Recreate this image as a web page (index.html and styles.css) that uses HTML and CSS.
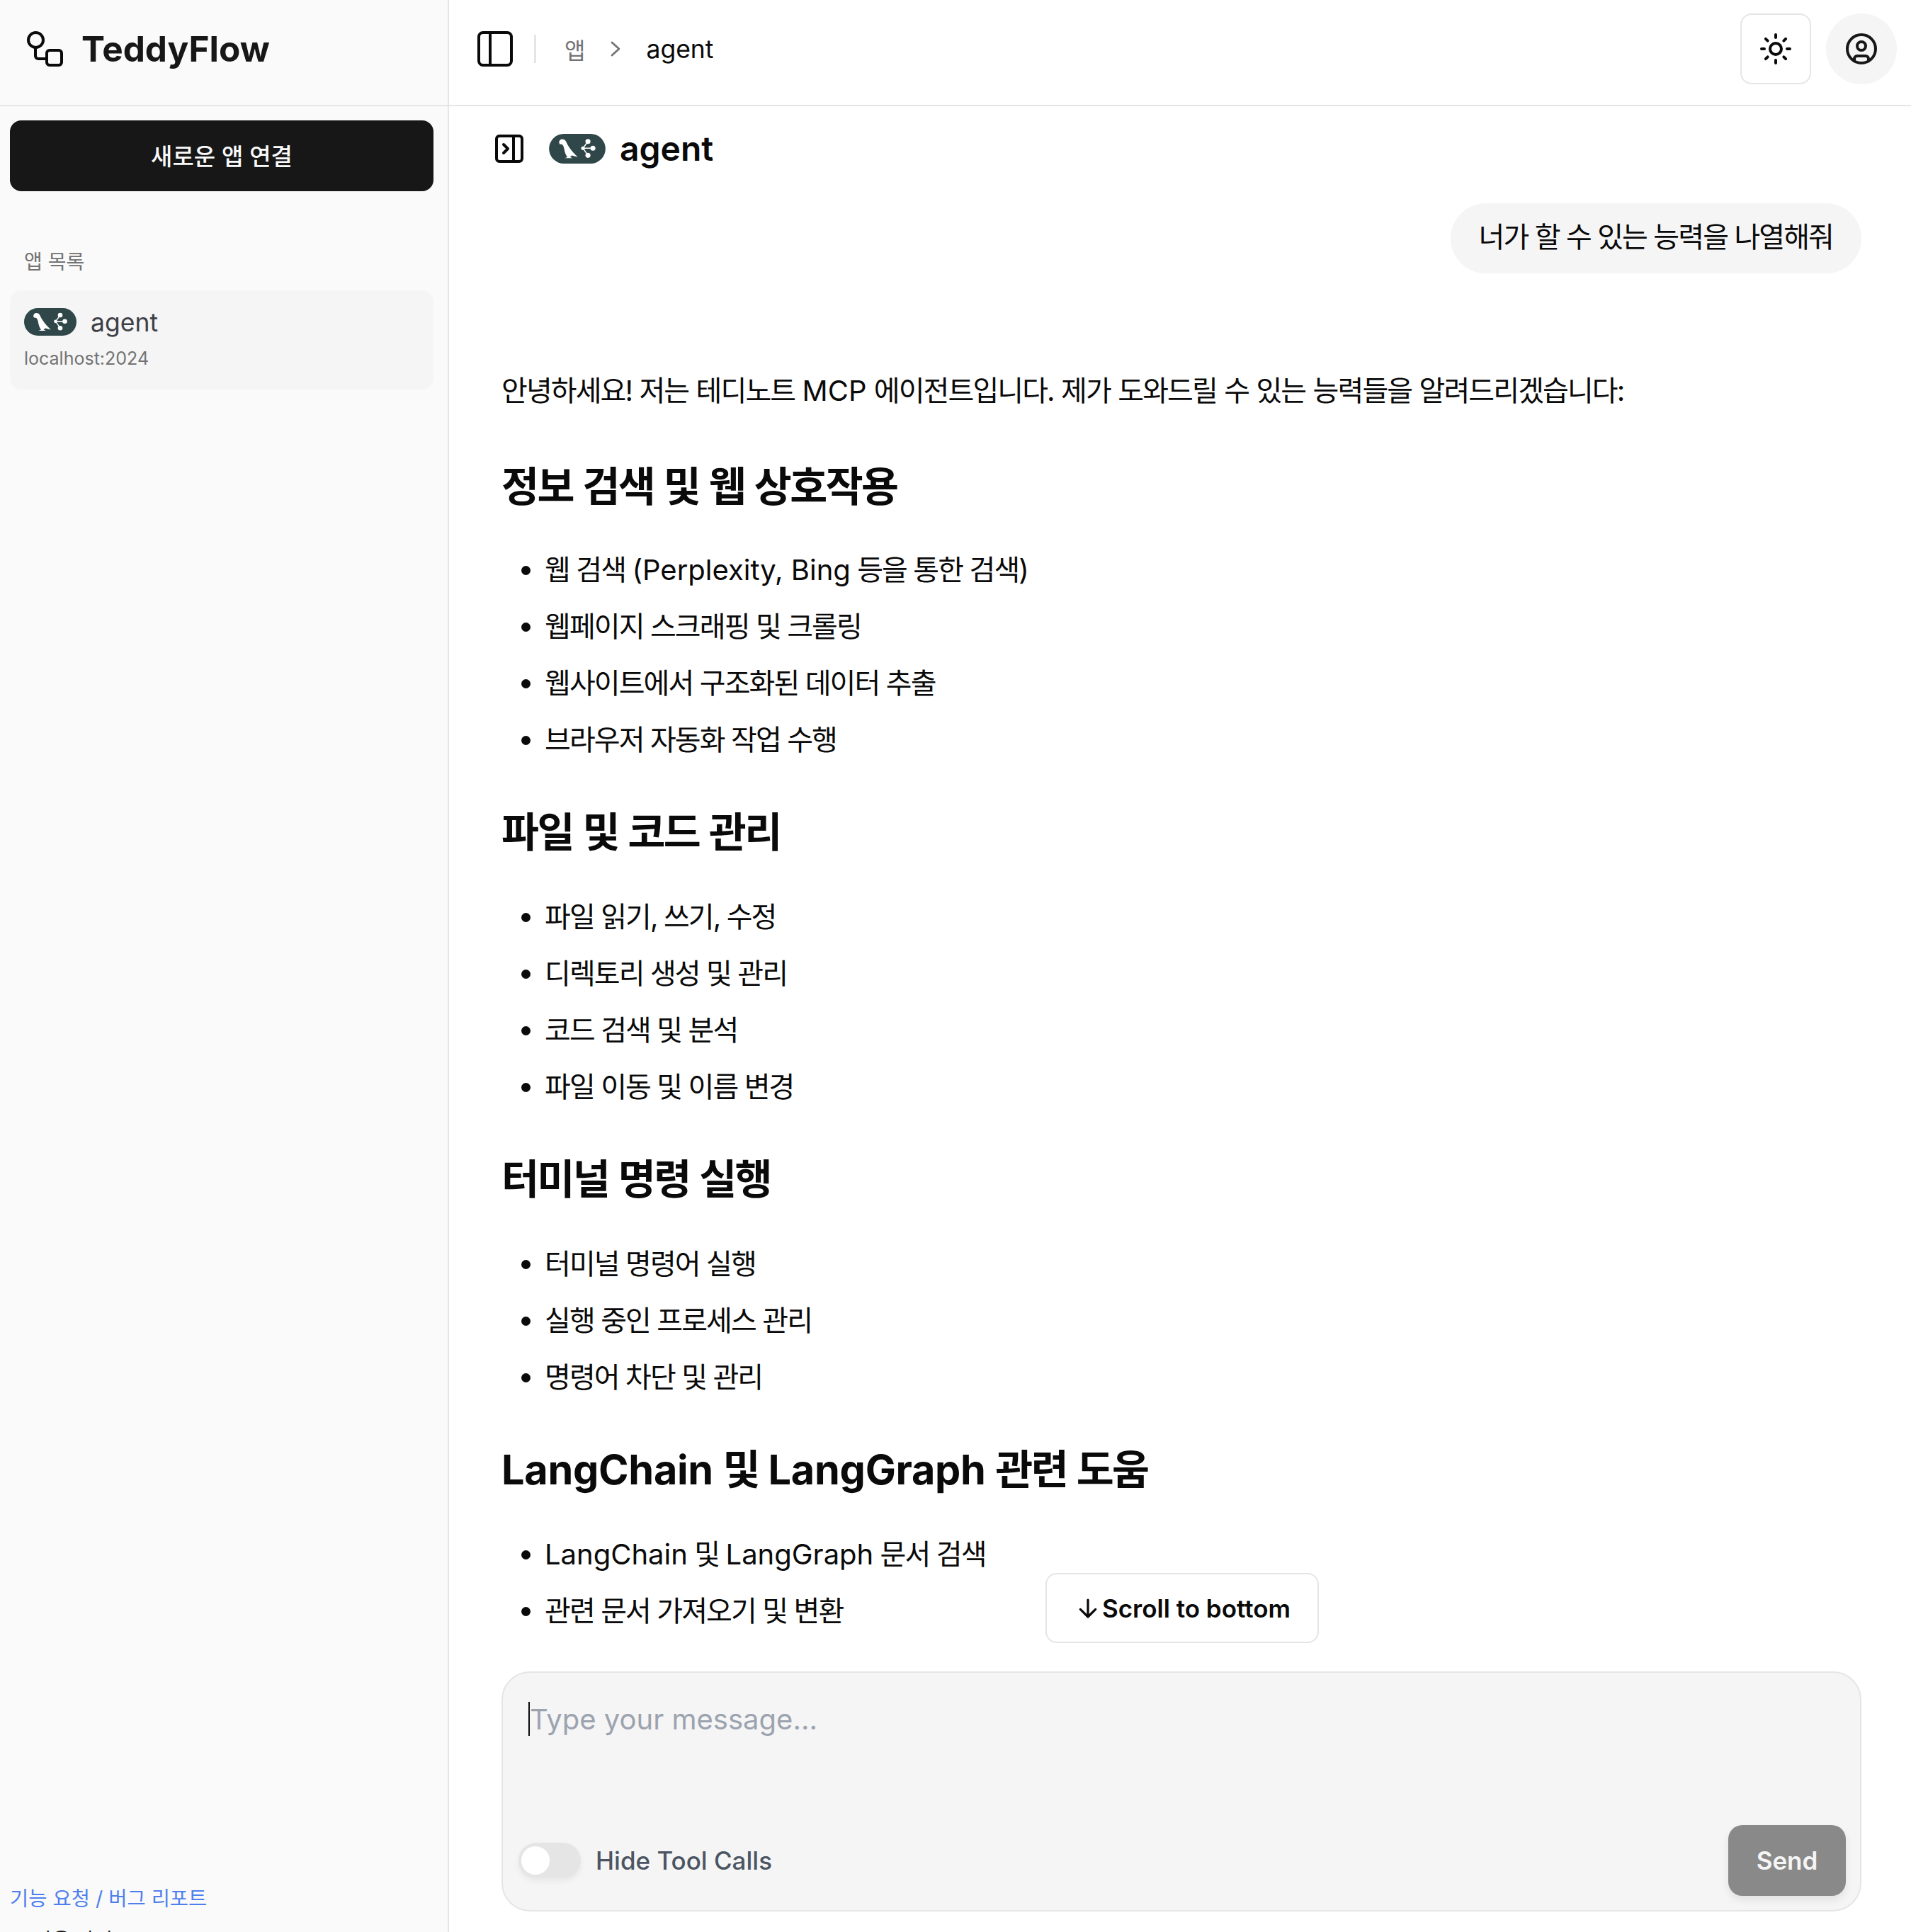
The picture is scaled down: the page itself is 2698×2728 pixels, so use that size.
FILE: index.html
```html
<!DOCTYPE html>
<html lang="ko">
<head>
<meta charset="utf-8">
<title>TeddyFlow</title>
<link rel="stylesheet" href="styles.css">
</head>
<body>
<svg class="defs" width="0" height="0" aria-hidden="true">
  <symbol id="lg" viewBox="0 0 74 39">
    <rect width="74" height="39" rx="19.5" fill="#2f4748"/>
    <path fill="#fff" d="M13.100 11C13.500 8.500 15 6.900 17 6.900 20 6.900 21.500 8 22.500 10.500 23.500 13 25 15.500 26.600 17.800 29.500 22 33.500 26.500 37.600 30.400L30 28.400 27.500 30.500 31 31.900H20.500L24 30.600C22 28 20.500 24 19.700 19 19.200 16.500 18.500 15 17.500 14.300 16 13.200 14.200 14 13.800 13.200Z"/>
    <g fill="#fff">
      <circle cx="51" cy="10" r="3.300"/>
      <circle cx="57.500" cy="18.800" r="3.300"/>
      <circle cx="51" cy="28.200" r="3.300"/>
      <circle cx="44.500" cy="18.800" r="2.400"/>
    </g>
    <path fill="none" stroke="#fff" stroke-width="1.400" stroke-linecap="round" d="M44.500 18.800H55M44.500 18.800L51 10M44.500 18.800L51 28.200"/>
  </symbol>
</svg>
<aside class="sidebar">
  <div class="brand">
    <svg class="brand-icon" viewBox="0 0 52 52" fill="none" stroke="currentColor" stroke-width="4" stroke-linecap="round" stroke-linejoin="round">
      <circle cx="12.500" cy="12.500" r="10.500"/>
      <path d="M12 23v12a4 4 0 0 0 4 4h12"/>
      <rect x="28" y="27" width="21" height="21" rx="4"/>
    </svg>
    <span class="brand-name">TeddyFlow</span>
  </div>
  <div class="sidebar-body">
    <button class="new-app">새로운 앱 연결</button>
    <div class="section-label">앱 목록</div>
    <div class="app-card">
      <div class="app-row">
        <svg class="pill-sm"><use href="#lg"/></svg>
        <span class="app-name">agent</span>
      </div>
      <div class="app-url">localhost:2024</div>
    </div>
  </div>
  <div class="sidebar-foot">
    <a class="report" href="#">기능 요청 / 버그 리포트</a>
    <div class="foot-line">사용 가이드</div>
  </div>
</aside>
<main class="main">
  <header class="topbar">
    <svg class="toggle-icon" viewBox="0 0 50 50" fill="none" stroke="currentColor" stroke-width="4">
      <rect x="2" y="2" width="46" height="46" rx="6"/>
      <path d="M18 2v46"/>
    </svg>
    <span class="vsep"></span>
    <span class="crumb">앱</span>
    <svg class="chev" viewBox="0 0 14 22" fill="none" stroke="currentColor" stroke-width="2.800" stroke-linecap="round" stroke-linejoin="round"><path d="M2 2l10 9-10 9"/></svg>
    <span class="crumb-cur">agent</span>
    <div class="top-actions">
      <button class="theme-btn">
        <svg class="ico48" viewBox="0 0 24 24" fill="none" stroke="currentColor" stroke-width="2" stroke-linecap="round" stroke-linejoin="round"><circle cx="12" cy="12" r="4"/><path d="M12 2v2M12 20v2M4.930 4.930l1.410 1.410M17.660 17.660l1.410 1.410M2 12h2M20 12h2M6.340 17.660l-1.410 1.410M19.070 4.930l-1.410 1.410"/></svg>
      </button>
      <button class="avatar-btn">
        <svg class="ico48" viewBox="0 0 24 24" fill="none" stroke="currentColor" stroke-width="2" stroke-linecap="round" stroke-linejoin="round"><circle cx="12" cy="12" r="10"/><circle cx="12" cy="10" r="3"/><path d="M7 20.662V19a2 2 0 0 1 2-2h6a2 2 0 0 1 2 2v1.662"/></svg>
      </button>
    </div>
  </header>
  <section class="chat">
    <div class="chat-title">
      <svg class="ico48 panel" viewBox="0 0 24 24" fill="none" stroke="currentColor" stroke-width="2" stroke-linecap="round" stroke-linejoin="round"><rect x="3" y="3" width="18" height="18" rx="2"/><path d="M15 3v18M8 9l3 3-3 3"/></svg>
      <svg class="pill-lg"><use href="#lg"/></svg>
      <h1 class="chat-name">agent</h1>
    </div>
    <div class="messages">
      <div class="bubble">너가 할 수 있는 능력을 나열해줘</div>
      <p class="intro">안녕하세요! 저는 테디노트 <span class="en">MCP</span> 에이전트입니다. 제가 도와드릴 수 있는 능력들을 알려드리겠습니다:</p>
      <h2>정보 검색 및 웹 상호작용</h2>
      <ul>
        <li>웹 검색 <span class="en">(Perplexity, Bing</span> 등을 통한 검색<span class="en">)</span></li>
        <li>웹페이지 스크래핑 및 크롤링</li>
        <li>웹사이트에서 구조화된 데이터 추출</li>
        <li>브라우저 자동화 작업 수행</li>
      </ul>
      <h2>파일 및 코드 관리</h2>
      <ul>
        <li>파일 읽기, 쓰기, 수정</li>
        <li>디렉토리 생성 및 관리</li>
        <li>코드 검색 및 분석</li>
        <li>파일 이동 및 이름 변경</li>
      </ul>
      <h2>터미널 명령 실행</h2>
      <ul>
        <li>터미널 명령어 실행</li>
        <li>실행 중인 프로세스 관리</li>
        <li>명령어 차단 및 관리</li>
      </ul>
      <h2><span class="en">LangChain</span> 및 <span class="en">LangGraph</span> 관련 도움</h2>
      <ul>
        <li><span class="en">LangChain</span> 및 <span class="en">LangGraph</span> 문서 검색</li>
        <li>관련 문서 가져오기 및 변환</li>
      </ul>
    </div>
    <button class="scroll-btn">
      <svg class="arrow" viewBox="0 0 24 24" fill="none" stroke="currentColor" stroke-width="2.400" stroke-linecap="round" stroke-linejoin="round"><path d="M12 3v18M4 13l8 8 8-8"/></svg>
      <span>Scroll to bottom</span>
    </button>
  </section>
  <form class="composer">
    <div class="input-line"><span class="caret"></span><span class="placeholder">Type your message...</span></div>
    <div class="composer-foot">
      <span class="switch"><span class="knob"></span></span>
      <span class="switch-label">Hide Tool Calls</span>
      <button class="send" type="button">Send</button>
    </div>
  </form>
</main>
</body>
</html>
```
FILE: styles.css
```css
* { box-sizing: border-box; }
html, body { margin: 0; height: 2728px; overflow: hidden; }
body {
  display: flex;
  width: 2698px;
  background: #fff;
  color: #0a0a0a;
  font-family: Inter, "Noto Sans CJK KR", sans-serif;
}
.defs { position: absolute; }
button { font-family: inherit; margin: 0; }

.sidebar {
  width: 634px;
  flex: none;
  height: 2728px;
  display: flex;
  flex-direction: column;
  background: #fafafa;
  border-right: 2px solid #e5e5e5;
}
.brand {
  height: 150px;
  flex: none;
  display: flex;
  align-items: center;
  gap: 25px;
  padding: 0 0 10px 38px;
  border-bottom: 2px solid #e5e5e5;
}
.brand-icon { width: 52px; height: 52px; margin-top: 2px; color: #0a0a0a; }
.brand-name { font-size: 49.500px; font-weight: 700; color: #171717; }
.sidebar-body { flex: 1; padding: 20px 20px 0 14px; }
.new-app {
  width: 598px;
  height: 100px;
  padding: 0 0 3px;
  border: 0;
  border-radius: 16px;
  background: #171717;
  color: #fafafa;
  font-size: 33px;
  font-weight: 500;
}
.section-label { margin: 72px 0 0 20px; font-size: 28px; line-height: 56px; color: #737373; height: 56px; }
.app-card {
  margin-top: 12px;
  width: 598px;
  height: 140px;
  padding: 25px 20px 0 20px;
  border-radius: 16px;
  background: #f5f5f5;
}
.app-row { display: flex; align-items: center; gap: 20px; height: 39px; }
.pill-sm { width: 74px; height: 39px; flex: none; }
.app-name { margin-top: 2px; font-size: 35.500px; color: #3f3f46; }
.app-url { margin-top: 14px; font-size: 25px; line-height: 36px; color: #737373; }
.sidebar-foot { height: 78px; padding-left: 14px; overflow: hidden; }
.report { display: block; height: 73px; padding-top: 14px; line-height: 34px; font-size: 28.500px; color: #4f7fee; text-decoration: none; }
.foot-line { padding-left: 34px; line-height: 34px; font-size: 28px; color: #171717; }

.main { flex: 1; min-width: 0; height: 2728px; display: flex; flex-direction: column; }
.topbar {
  height: 150px;
  flex: none;
  display: flex;
  align-items: center;
  padding: 0 20px 10px 40px;
  border-bottom: 2px solid #e5e5e5;
}
.toggle-icon { width: 50px; height: 50px; flex: none; color: #0a0a0a; }
.vsep { width: 3px; height: 40px; margin-left: 30px; background: #e5e5e5; }
.crumb { margin-left: 40px; font-size: 32px; color: #737373; }
.chev { width: 14px; height: 22px; margin-left: 36px; color: #737373; }
.crumb-cur { margin-left: 36px; font-size: 35.500px; color: #0a0a0a; }
.top-actions { margin-left: auto; display: flex; gap: 21px; }
.theme-btn {
  width: 100px; height: 100px;
  display: flex; align-items: center; justify-content: center;
  padding: 0;
  background: #fff;
  border: 2px solid #e5e5e5;
  border-radius: 16px;
  color: #0a0a0a;
}
.avatar-btn {
  width: 100px; height: 100px;
  display: flex; align-items: center; justify-content: center;
  padding: 0;
  border: 0;
  border-radius: 50%;
  background: #f5f5f5;
  color: #171717;
}
.ico48 { width: 48px; height: 48px; flex: none; }

.chat {
  position: relative;
  flex: 1;
  min-height: 0;
  padding: 36px 70px 0 74px;
}
.chat-title { display: flex; align-items: center; height: 48px; margin-left: -13px; }
.panel { color: #0a0a0a; }
.pill-lg { width: 80px; height: 42px; margin-left: 32px; flex: none; }
.chat-name { margin: -2px 0 0 20px; font-size: 48px; font-weight: 600; }
.messages { height: 2090px; overflow: hidden; letter-spacing: -1.900px; }
.en { letter-spacing: 0; word-spacing: 0; }
.bubble {
  width: fit-content;
  margin: 53px 0 0 auto;
  padding: 0 40px;
  height: 99px;
  line-height: 96px;
  border-radius: 50px;
  background: #f5f5f5;
  font-size: 40px;
}
.intro { margin: 134px 0 0; font-size: 40px; line-height: 64px; word-spacing: 1px; }
h2 { margin: 55px 0 45px; font-size: 57.600px; font-weight: 700; line-height: 70px; letter-spacing: -2.600px; word-spacing: 2.600px; }
h2 .en { letter-spacing: -.3px; }
.intro + h2 { margin-top: 68px; margin-bottom: 43px; }
ul { margin: 0; padding: 0 0 0 61px; }
li { font-size: 40px; line-height: 80px; }
.scroll-btn {
  position: absolute;
  left: 50%;
  top: 2071px;
  transform: translateX(-50%);
  width: 386px;
  height: 99px;
  margin-left: 3px;
  display: flex;
  align-items: center;
  justify-content: center;
  gap: 4px;
  padding: 0 0 0 4px;
  background: #fff;
  border: 2px solid #e5e5e5;
  border-radius: 16px;
  color: #0a0a0a;
  font-size: 35px;
  font-weight: 600;
}
.arrow { width: 32px; height: 32px; flex: none; }

.composer {
  flex: none;
  height: 339px;
  margin: 0 70px 29px 74px;
  padding: 40px 20px 20px 22px;
  display: flex;
  flex-direction: column;
  background: #f5f5f5;
  border: 2px solid #e5e5e5;
  border-radius: 40px;
}
.input-line { display: flex; align-items: center; height: 50px; padding-left: 14px; }
.caret { width: 2px; height: 48px; background: #0a0a0a; }
.placeholder { font-size: 40px; color: #9ca3af; }
.composer-foot { margin-top: auto; display: flex; align-items: center; }
.switch { position: relative; width: 88px; height: 50px; border-radius: 25px; background: #e5e5e5; box-shadow: 0 4px 8px rgba(0,0,0,.06); }
.knob { position: absolute; left: 4px; top: 5px; width: 40px; height: 40px; border-radius: 50%; background: #fff; }
.switch-label { margin-left: 21px; font-size: 35px; font-weight: 500; color: #4b5563; }
.send {
  margin-left: auto;
  width: 166px;
  height: 100px;
  border: 0;
  border-radius: 20px;
  background: #898989;
  color: #f5f5f5;
  font-size: 35px;
  font-weight: 600;
  box-shadow: 0 6px 12px rgba(0,0,0,.08);
}
```
